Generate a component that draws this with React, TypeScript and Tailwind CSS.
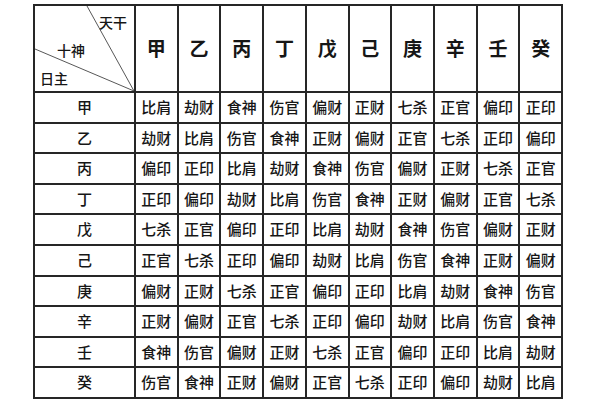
import { Fragment } from "react";

const stems = ["甲", "乙", "丙", "丁", "戊", "己", "庚", "辛", "壬", "癸"];

const rows: string[][] = [
  ["比肩", "劫财", "食神", "伤官", "偏财", "正财", "七杀", "正官", "偏印", "正印"],
  ["劫财", "比肩", "伤官", "食神", "正财", "偏财", "正官", "七杀", "正印", "偏印"],
  ["偏印", "正印", "比肩", "劫财", "食神", "伤官", "偏财", "正财", "七杀", "正官"],
  ["正印", "偏印", "劫财", "比肩", "伤官", "食神", "正财", "偏财", "正官", "七杀"],
  ["七杀", "正官", "偏印", "正印", "比肩", "劫财", "食神", "伤官", "偏财", "正财"],
  ["正官", "七杀", "正印", "偏印", "劫财", "比肩", "伤官", "食神", "正财", "偏财"],
  ["偏财", "正财", "七杀", "正官", "偏印", "正印", "比肩", "劫财", "食神", "伤官"],
  ["正财", "偏财", "正官", "七杀", "正印", "偏印", "劫财", "比肩", "伤官", "食神"],
  ["食神", "伤官", "偏财", "正财", "七杀", "正官", "偏印", "正印", "比肩", "劫财"],
  ["伤官", "食神", "正财", "偏财", "正官", "七杀", "正印", "偏印", "劫财", "比肩"],
];

const font = { fontFamily: '"Noto Sans CJK SC", "Noto Sans", sans-serif' };

const App = () => {
  return (
    <div className="w-[600px] h-[400px] bg-white overflow-hidden pt-[4px] pl-[33px]" style={font}>
      <div className="grid w-[530px] grid-cols-[99px_repeat(10,1fr)] grid-rows-[85px_repeat(10,28.6px)] gap-[2px] p-[2px] bg-[#262626] text-[#161616]">
        {/* corner cell, split by two diagonals */}
        <div className="relative bg-white flex flex-col gap-[14px] pt-[9px] text-[14px] font-medium leading-none">
          <svg className="absolute inset-0" width="99" height="85" viewBox="0 0 99 85">
            <line x1="52" y1="0" x2="99" y2="85" stroke="#444" strokeWidth="0.9" />
            <line x1="0" y1="43" x2="99" y2="85" stroke="#444" strokeWidth="0.9" />
          </svg>
          <span className="self-end pr-[7px]">天干</span>
          <span className="pl-[22px]">十神</span>
          <span className="pl-[5px]">日主</span>
        </div>
        {stems.map((s) => (
          <div key={s} className="bg-white flex items-center justify-center text-[19px] font-bold">
            {s}
          </div>
        ))}
        {rows.map((r, i) => (
          <Fragment key={i}>
            <div className="bg-white flex items-center justify-center text-[15px] font-medium">
              {stems[i]}
            </div>
            {r.map((c, j) => (
              <div key={j} className="bg-white flex items-center justify-center text-[15px] font-medium">
                {c}
              </div>
            ))}
          </Fragment>
        ))}
      </div>
    </div>
  );
};

export default App;
